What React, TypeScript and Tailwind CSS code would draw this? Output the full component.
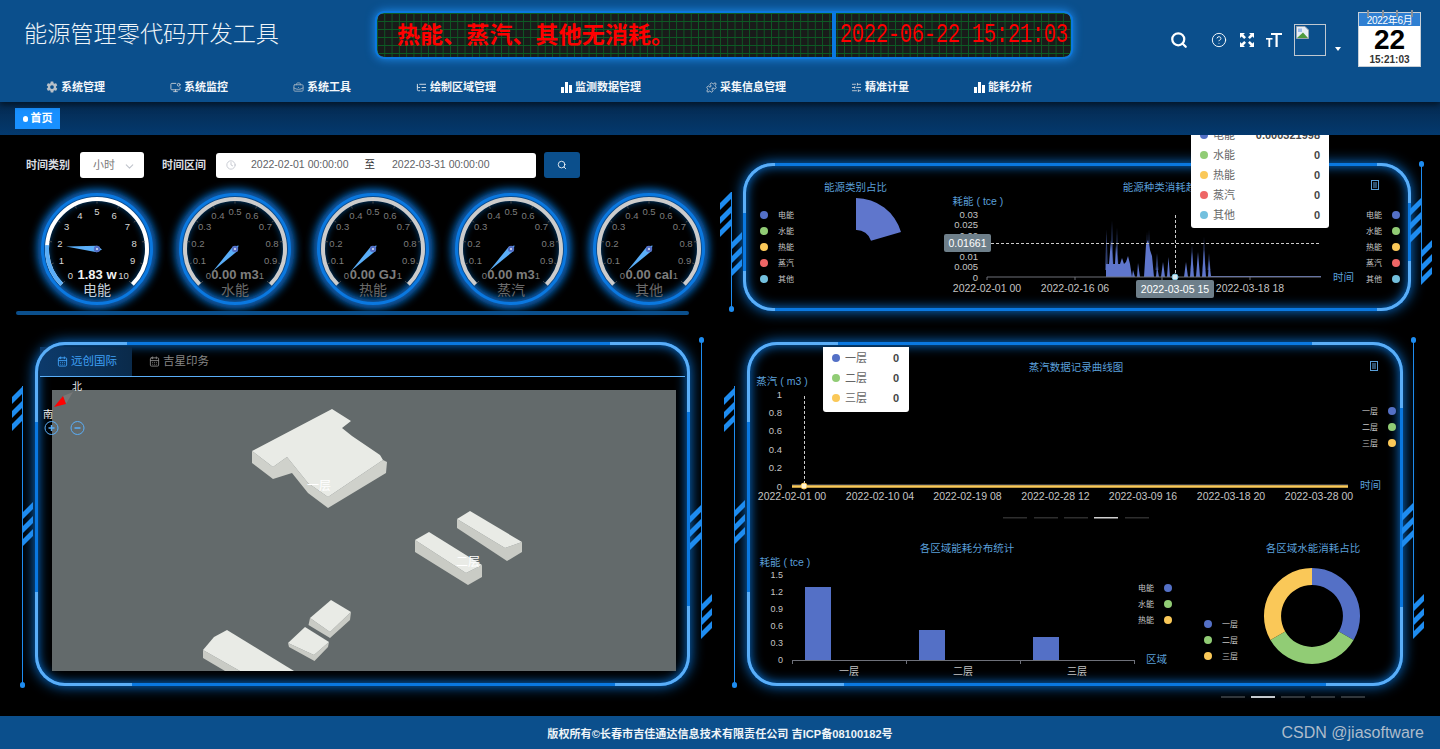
import {
  BriefcaseBusiness,
  CalendarDays,
  ChevronDown,
  CircleHelp,
  Clock,
  ListTree,
  MonitorDot,
  Puzzle,
  Search,
  SlidersHorizontal,
} from "lucide-react";
import { IoSettingsSharp } from "react-icons/io5";
import type { ReactNode } from "react";

const BLUE = "#5470c6";
const GREEN = "#91cc75";
const YELLOW = "#fac858";
const RED = "#ee6666";
const TEAL = "#73c0de";
const TITLE = "#5a9fd8";
const LABEL = "#c4c4c4";

const energyLegend = [
  { name: "电能", color: BLUE },
  { name: "水能", color: GREEN },
  { name: "热能", color: YELLOW },
  { name: "蒸汽", color: RED },
  { name: "其他", color: TEAL },
];
const floorLegend = [
  { name: "一层", color: BLUE },
  { name: "二层", color: GREEN },
  { name: "三层", color: YELLOW },
];

const Bars = () => (
  <svg width="11" height="11" viewBox="0 0 11 11" fill="#fff">
    <rect x="0" y="5" width="3" height="6" />
    <rect x="4" y="0" width="3" height="11" />
    <rect x="8" y="3" width="3" height="8" />
  </svg>
);

const navItems: { label: string; icon: ReactNode }[] = [
  { label: "系统管理", icon: <IoSettingsSharp size={12} color="#b8c0c8" /> },
  { label: "系统监控", icon: <MonitorDot size={11} color="#c4ccd4" /> },
  { label: "系统工具", icon: <BriefcaseBusiness size={11} color="#9fb0c0" /> },
  { label: "绘制区域管理", icon: <ListTree size={11} color="#dde4ea" /> },
  { label: "监测数据管理", icon: <Bars /> },
  { label: "采集信息管理", icon: <Puzzle size={11} color="#c4ccd4" /> },
  { label: "精准计量", icon: <SlidersHorizontal size={11} color="#c4ccd4" /> },
  { label: "能耗分析", icon: <Bars /> },
];

const Stripes = ({ className }: { className: string }) => (
  <svg className={`absolute ${className}`} width="12" height="45" viewBox="0 0 12 45" fill="#1e8cf0">
    <polygon points="0,11 11,0 11,7 0,18" />
    <polygon points="0,25 11,14 11,21 0,32" />
    <polygon points="0,38 11,27 11,34 0,45" />
  </svg>
);

const Rail = ({ className, dot }: { className: string; dot: "top" | "bottom" }) => (
  <div className={`absolute w-px bg-[#1e8cf0] ${className}`}>
    <div
      className={
        dot === "top"
          ? "absolute -top-[2px] -left-[2px] w-[5px] h-[6px] rounded-full bg-[#1e8cf0]"
          : "absolute -bottom-[2px] -left-[2px] w-[5px] h-[6px] rounded-full bg-[#1e8cf0]"
      }
    />
  </div>
);

const Panel = ({
  className,
  corners,
  children,
}: {
  className: string;
  corners: [string, string, string, string];
  children: ReactNode;
}) => (
  <div
    className={`relative border-[3px] border-[#0a78e0] rounded-[30px] shadow-[0_0_14px_#0a78e0,inset_0_0_12px_#0a78e0] ${className}`}
  >
    <div className={`absolute -top-[3px] -left-[3px] border-t-[3px] border-l-[3px] border-[#5aaef8] rounded-tl-[30px] ${corners[0]}`} />
    <div className={`absolute -top-[3px] -right-[3px] border-t-[3px] border-r-[3px] border-[#5aaef8] rounded-tr-[30px] ${corners[1]}`} />
    <div className={`absolute -bottom-[3px] -left-[3px] border-b-[3px] border-l-[3px] border-[#5aaef8] rounded-bl-[30px] ${corners[2]}`} />
    <div className={`absolute -bottom-[3px] -right-[3px] border-b-[3px] border-r-[3px] border-[#5aaef8] rounded-br-[30px] ${corners[3]}`} />
    {children}
  </div>
);

const polar = (cx: number, cy: number, r: number, t: number) => {
  const a = ((225 - 270 * t) * Math.PI) / 180;
  return [cx + r * Math.cos(a), cy - r * Math.sin(a)];
};

const arc = (cx: number, cy: number, r: number, t0: number, t1: number) => {
  const [x0, y0] = polar(cx, cy, r, t0);
  const [x1, y1] = polar(cx, cy, r, t1);
  return `M${x0} ${y0}A${r} ${r} 0 ${(t1 - t0) * 270 > 180 ? 1 : 0} 1 ${x1} ${y1}`;
};

const Gauge = ({
  value,
  max,
  unit,
  name,
  step,
}: {
  value: number;
  max: number;
  unit: string;
  name: string;
  step: number;
}) => {
  const cx = 69;
  const cy = 71;
  const t = value / max;
  const live = value > 0;
  const [tx, ty] = polar(cx, cy, 31, t);
  const [b1x, b1y] = polar(cx, cy, 3.2, t + 0.33);
  const [b2x, b2y] = polar(cx, cy, 3.2, t - 0.33);
  const [bx, by] = polar(cx, cy, 5, t + 0.667);
  const ticks = Array.from({ length: 11 }, (_, i) => i);
  return (
    <svg width="138" height="133" viewBox="0 0 138 133" className="overflow-visible shrink-0">
      <defs>
        <filter id={`glow-${name}`} x="-30%" y="-30%" width="160%" height="160%">
          <feGaussianBlur stdDeviation="4" />
        </filter>
      </defs>
      <circle cx={cx} cy={cy} r="55" fill="none" stroke="#0a78e0" strokeWidth="9" filter={`url(#glow-${name})`} />
      <circle cx={cx} cy={cy} r="54.5" fill="none" stroke="#0a78e0" strokeWidth="3" />
      <path d={arc(cx, cy, 50, 0, 1)} fill="none" stroke={live ? "#ffffff" : "#cccccc"} strokeWidth="4" />
      {live && <path d={arc(cx, cy, 50, 0, t)} fill="none" stroke="#5aaef8" strokeWidth="4" />}
      {ticks.map((i) => {
        const [x0, y0] = polar(cx, cy, 48, i / 10);
        const [x1, y1] = polar(cx, cy, 45.5, i / 10);
        const [lx, ly] = polar(cx, cy, 37.5, i / 10);
        const label = step === 1 ? String(i) : i === 0 ? "0" : i === 10 ? "1" : (i * step).toFixed(1);
        return (
          <g key={i}>
            <line x1={x0} y1={y0} x2={x1} y2={y1} stroke="#4a4a4a" />
            <text x={lx} y={ly + 3.5} textAnchor="middle" fontSize="9.5" fill={live ? "#d8d8d8" : "#7d7d7d"}>
              {label}
            </text>
          </g>
        );
      })}
      <polygon points={`${tx},${ty} ${b1x},${b1y} ${bx},${by} ${b2x},${b2y}`} fill="#5aaef8" />
      <circle cx={cx} cy={cy} r="3.2" fill={BLUE} />
      <circle cx={cx} cy={cy} r="1" fill="#dfe6f7" />
      <text x={cx} y={cy + 30} textAnchor="middle" fontSize="13" fontWeight="700" fill={live ? "#f2f2f2" : "#7d7d7d"}>
        {value.toFixed(2)} {unit}
      </text>
      <text x={cx} y={cy + 46} textAnchor="middle" fontSize="14" fill={live ? "#c4d0dc" : "#6a6a6a"}>
        {name}
      </text>
    </svg>
  );
};

const Legend = ({
  items,
  x,
  y,
  dotFirst,
}: {
  items: { name: string; color: string }[];
  x: number;
  y: number;
  dotFirst?: boolean;
}) => (
  <>
    {items.map((item, i) => (
      <g key={item.name}>
        <circle cx={dotFirst ? x : x + 30} cy={y + i * 16} r="4" fill={item.color} />
        <text x={dotFirst ? x + 14 : x} y={y + i * 16 + 3} fontSize="8" fill={LABEL}>
          {item.name}
        </text>
      </g>
    ))}
  </>
);

const DocIcon = ({ x, y }: { x: number; y: number }) => (
  <g transform={`translate(${x} ${y})`} fill="none" stroke={TITLE} strokeWidth="1">
    <rect x="0.5" y="0.5" width="7" height="9" />
    <line x1="2" y1="3" x2="6" y2="3" />
    <line x1="2" y1="5" x2="6" y2="5" />
    <line x1="2" y1="7" x2="6" y2="7" />
  </g>
);

const Tooltip = ({
  className,
  rows,
}: {
  className: string;
  rows: { name: string; color: string; value: string }[];
}) => (
  <div className={`absolute z-10 bg-white ${className}`}>
    {rows.map((r) => (
      <div key={r.name} className="flex items-center h-[20px]">
        <span className="w-[8px] h-[8px] rounded-full" style={{ backgroundColor: r.color }} />
        <span className="ml-[5px] text-[11px] text-[#666]">{r.name}</span>
        <span className="ml-auto text-[11px] font-bold text-[#464646]">{r.value}</span>
      </div>
    ))}
  </div>
);

const Pager = ({ active, className }: { active: number; className: string }) => (
  <div className={`flex gap-[6px] ${className}`}>
    {[0, 1, 2, 3, 4].map((i) => (
      <div key={i} className={i === active ? "w-[24px] h-[2px] bg-[#cfcfcf]" : "w-[24px] h-[2px] bg-[#333]"} />
    ))}
  </div>
);

// solid part of the trend series, thin dim peaks are drawn behind it
const trend =
  "1106,277 1106,264 1109,264 1111,240 1113,264 1115,264 1116,245 1118,264 1120,264 1122,258 1124,264 1126,262 1128,256 1130,264 1132,277 " +
  "1133,270 1135,277 1137,277 1138,263 1140,277 1144,277 1146,245 1148,240 1150,250 1152,256 1154,277 1156,277 1157,266 1159,277 1161,277 1163,262 1165,277 " +
  "1167,277 1168.5,257 1170,277 1184,277 1186,262 1188,277 1190,277 1192,252 1194,277 1196,277 1198,252 1200,277 1202,277 1204,250 1206,277 1208,277 1209,260 1211,276 1321,276 1321,277";

const peaks = [
  [1106.5, 230],
  [1112, 220],
  [1117, 228],
  [1147, 232],
  [1149, 230],
  [1157, 253],
  [1192, 245],
  [1204, 237],
  [1209, 253],
];

const EnergyPie = () => (
  <svg width="194" height="142" viewBox="746 166 194 142" className="shrink-0">
    <Legend items={energyLegend} x={764} y={215} dotFirst />
    <text x="855.5" y="191" textAnchor="middle" fontSize="10.5" fill={TITLE}>
      能源类别占比
    </text>
    <path d="M856 198A47 47 0 0 1 901 232L871 240.7A15 15 0 0 0 856 230Z" fill="#5f76cc" />
  </svg>
);

const EnergyTrend = () => (
  <svg width="468" height="142" viewBox="940 166 468 142" className="shrink-0">
    <text x="1170" y="191" textAnchor="middle" fontSize="10.5" fill={TITLE}>
      能源种类消耗趋势图
    </text>
    <text x="978" y="205" textAnchor="middle" fontSize="10.5" fill={TITLE}>
      耗能 ( tce )
    </text>
    {[
      ["0.03", 214],
      ["0.025", 224.5],
      ["0.02", 235],
      ["0.01", 256],
      ["0.005", 266.5],
      ["0", 277],
    ].map(([t, y]) => (
      <text key={t} x="978" y={Number(y) + 3.5} textAnchor="end" fontSize="9.5" fill={LABEL}>
        {t}
      </text>
    ))}
    {peaks.map(([x, y]) => (
      <polygon key={x} points={`${x - 1.5},270 ${x},${y} ${x + 1.5},270`} fill={BLUE} fillOpacity="0.55" />
    ))}
    <polygon points={trend} fill="#5f76cc" />
    <line x1="987" y1="277" x2="1321" y2="277" stroke="#6e7079" />
    {[987, 1075, 1162, 1250].map((x) => (
      <line key={x} x1={x} y1="277" x2={x} y2="280" stroke="#6e7079" />
    ))}
    {[
      ["2022-02-01 00", 987],
      ["2022-02-16 06", 1075],
      ["2022-03-18 18", 1250],
    ].map(([t, x]) => (
      <text key={t} x={x} y="292" textAnchor="middle" fontSize="10.5" fill={LABEL}>
        {t}
      </text>
    ))}
    <line x1="991" y1="243.5" x2="1321" y2="243.5" stroke="#ccc" strokeDasharray="3 2" />
    <line x1="1175.5" y1="215" x2="1175.5" y2="277" stroke="#ccc" strokeDasharray="3 2" />
    <circle cx="1175" cy="277" r="3" fill="#d8e8f0" stroke={TEAL} />
    <rect x="944" y="234" width="47" height="18" rx="2" fill="#6e7f8a" />
    <text x="967.5" y="247" textAnchor="middle" fontSize="10.5" fill="#fff">
      0.01661
    </text>
    <rect x="1136" y="280" width="78" height="18" rx="2" fill="#6e7f8a" />
    <text x="1175" y="292.5" textAnchor="middle" fontSize="10.5" fill="#fff">
      2022-03-05 15
    </text>
    <text x="1333" y="281" fontSize="10.5" fill={TITLE}>
      时间
    </text>
    <DocIcon x={1371} y={180} />
    <Legend items={energyLegend} x={1366} y={215} />
  </svg>
);

const SteamChart = () => (
  <svg width="650" height="200" viewBox="750 345 650 200" className="block">
    <text x="1076" y="371" textAnchor="middle" fontSize="10.5" fill={TITLE}>
      蒸汽数据记录曲线图
    </text>
    <text x="782" y="385" textAnchor="middle" fontSize="10.5" fill={TITLE}>
      蒸汽 ( m3 )
    </text>
    {[
      ["1", 394],
      ["0.8", 412.5],
      ["0.6", 430.5],
      ["0.4", 449],
      ["0.2", 467.5],
      ["0", 486],
    ].map(([t, y]) => (
      <text key={t} x="782" y={Number(y) + 3.5} textAnchor="end" fontSize="9.5" fill={LABEL}>
        {t}
      </text>
    ))}
    <line x1="804.5" y1="396" x2="804.5" y2="484" stroke="#ccc" strokeDasharray="3 2" />
    <line x1="792" y1="485" x2="1348" y2="485" stroke="#6e7079" />
    <line x1="792" y1="486.5" x2="1348" y2="486.5" stroke={YELLOW} strokeWidth="2.5" />
    <circle cx="804" cy="486" r="3" fill="#fff4d0" stroke={YELLOW} />
    {[
      ["2022-02-01 00", 792],
      ["2022-02-10 04", 880],
      ["2022-02-19 08", 967.5],
      ["2022-02-28 12", 1055.5],
      ["2022-03-09 16", 1143],
      ["2022-03-18 20", 1231],
      ["2022-03-28 00", 1319],
    ].map(([t, x]) => (
      <text key={t} x={x} y="500" textAnchor="middle" fontSize="10.5" fill={LABEL}>
        {t}
      </text>
    ))}
    <text x="1360" y="489" fontSize="10.5" fill={TITLE}>
      时间
    </text>
    <DocIcon x={1370} y={361} />
    <g transform="translate(-1 -4)">
      <Legend items={floorLegend} x={1363} y={415} />
    </g>
    {[1003, 1034, 1064, 1094, 1125].map((x) => (
      <rect key={x} x={x} y="517" width="24" height="1.5" fill={x === 1094 ? "#d0d0d0" : "#2e2e2e"} />
    ))}
  </svg>
);

const AreaBars = () => (
  <svg width="450" height="138" viewBox="750 545 450 138" className="shrink-0 overflow-visible">
    <text x="967" y="552" textAnchor="middle" fontSize="10.5" fill={TITLE}>
      各区域能耗分布统计
    </text>
    <text x="785" y="566" textAnchor="middle" fontSize="10.5" fill={TITLE}>
      耗能 ( tce )
    </text>
    {[
      ["1.5", 575],
      ["1.2", 592],
      ["0.9", 609],
      ["0.6", 626],
      ["0.3", 643],
      ["0", 660],
    ].map(([t, y]) => (
      <text key={t} x="783" y={Number(y) + 3} textAnchor="end" fontSize="9" fill={LABEL}>
        {t}
      </text>
    ))}
    <rect x="805" y="587" width="26" height="73" fill={BLUE} />
    <rect x="919" y="630" width="26" height="30" fill={BLUE} />
    <rect x="1033" y="637" width="26" height="23" fill={BLUE} />
    <line x1="792" y1="660.5" x2="1134" y2="660.5" stroke="#6e7079" />
    {[792, 906, 1020, 1134].map((x) => (
      <line key={x} x1={x + 0.5} y1="660" x2={x + 0.5} y2="664" stroke="#6e7079" />
    ))}
    {[
      ["一层", 849],
      ["二层", 963],
      ["三层", 1077],
    ].map(([t, x]) => (
      <text key={t} x={x} y="675" textAnchor="middle" fontSize="10" fill={LABEL}>
        {t}
      </text>
    ))}
    <Legend items={floorLegend.map((f, i) => ({ ...f, name: energyLegend[i].name }))} x={1138} y={588} />
    <text x="1146" y="663" fontSize="10.5" fill={TITLE}>
      区域
    </text>
  </svg>
);

const AreaDonut = () => (
  <svg width="200" height="138" viewBox="1200 545 200 138" className="shrink-0 overflow-visible">
    <text x="1313" y="552" textAnchor="middle" fontSize="10.5" fill={TITLE}>
      各区域水能消耗占比
    </text>
    <Legend items={floorLegend} x={1208} y={624} dotFirst />
    <path d="M1312 568A48 48 0 0 1 1353.6 640L1338.8 631.5A31 31 0 0 0 1312 585Z" fill={BLUE} />
    <path d="M1353.6 640A48 48 0 0 1 1270.4 640L1285.2 631.5A31 31 0 0 0 1338.8 631.5Z" fill={GREEN} />
    <path d="M1270.4 640A48 48 0 0 1 1312 568L1312 585A31 31 0 0 0 1285.2 631.5Z" fill={YELLOW} />
  </svg>
);

const MapView = () => (
  <div className="relative w-[624px] h-[281px] ml-[12px] mt-[13px] bg-[#636a6b]">
    <svg width="624" height="281" viewBox="52 390 624 281" className="block">
      <polygon
        points="252,451 273,467 287,457 308,483 328,497 383,460 387,462 386,473 328,508 308,493 292,473 273,479 252,463"
        fill="#cfd1cb"
      />
      <polygon
        points="252,451 332,409 351,421 342,428 352,436 380,455 383,460 328,497 308,483 287,457 273,467"
        fill="#e9ebe6"
      />
      <polygon points="415,540 466,573 482,565 482,577 468,585 415,552" fill="#c9cbc5" />
      <polygon points="415,540 429,532 482,565 466,573" fill="#e9ebe6" />
      <polygon points="457,519 505,548 522,542 522,552 507,561 457,528" fill="#c9cbc5" />
      <polygon points="457,519 470,511 522,542 505,548" fill="#e9ebe6" />
      <polygon points="310,618 330,632 351,612 350,620 330,638 308.5,625" fill="#c9cbc5" />
      <polygon points="310,618 331,600 351,612 330,632" fill="#e9ebe6" />
      <polygon points="288,643 314,655 329,642 328,647 314.5,661 289,647" fill="#c9cbc5" />
      <polygon points="288,643 305,627 329,642 314,655" fill="#e9ebe6" />
      <polygon points="203,650 203,658 225,671 240,671" fill="#c9cbc5" />
      <polygon points="203,650 214,637 227,630 294,671 240,671" fill="#e9ebe6" />
    </svg>
    <span className="absolute left-[255px] top-[90px] text-[12px] leading-none text-white">一层</span>
    <span className="absolute left-[404px] top-[166px] text-[12px] leading-none text-white">二层</span>
    <Compass />
  </div>
);

const Compass = () => (
  <svg className="absolute -left-[11px] -top-[12px] overflow-visible" width="44" height="58" viewBox="41 378 44 58">
    <text x="77" y="390" textAnchor="middle" fontSize="10" fill="#eee">
      北
    </text>
    <text x="48" y="418" textAnchor="middle" fontSize="10" fill="#eee">
      南
    </text>
    <polygon points="63,396 73,392 66,404" fill="#777" />
    <polygon points="54,407 63,396 66,404" fill="#f00" />
    <circle cx="51.5" cy="428" r="6.5" fill="none" stroke="#5aaef8" />
    <path d="M48.5 428H54.5M51.5 425V431" stroke="#5aaef8" strokeWidth="1.5" />
    <circle cx="77.5" cy="428" r="6.5" fill="none" stroke="#5aaef8" />
    <path d="M74.5 428H80.5" stroke="#5aaef8" strokeWidth="1.5" />
  </svg>
);

const FullscreenIcon = () => (
  <svg width="16" height="16" viewBox="0 0 16 16" fill="#fff">
    <path d="M1 1H6L4.4 2.6L7 5.2L5.2 7L2.6 4.4L1 6Z" />
    <path d="M15 1V6L13.4 4.4L10.8 7L9 5.2L11.6 2.6L10 1Z" />
    <path d="M1 15V10L2.6 11.6L5.2 9L7 10.8L4.4 13.4L6 15Z" />
    <path d="M15 15H10L11.6 13.4L9 10.8L10.8 9L13.4 11.6L15 10Z" />
  </svg>
);

const FontSizeIcon = () => (
  <svg width="16" height="16" viewBox="0 0 16 16" fill="#fff">
    <rect x="5" y="1" width="11" height="2" />
    <rect x="9.5" y="1" width="2.2" height="14" />
    <rect x="0" y="6" width="6.5" height="1.6" />
    <rect x="2.4" y="6" width="1.8" height="9" />
  </svg>
);

const BrokenImage = () => (
  <svg width="13" height="13" viewBox="0 0 13 13" className="absolute left-px top-px">
    <path d="M0.5 0.5H9L12.5 4V12.5H0.5Z" fill="#e8eef6" stroke="#9aa4b0" />
    <path d="M1 12L7 6.5L12 12Z" fill="#4f9a3e" />
    <path d="M2 2.5H6V6H2Z" fill="#9fbce8" />
  </svg>
);

const CalendarCard = () => (
  <div className="relative w-[63px] h-[55px] bg-white border border-[#c8d0d8] flex flex-col items-center shrink-0">
    <div className="w-full h-[13px] bg-[#2f7fd2] text-white text-[10px] leading-[15px] text-center tracking-[-0.3px]">
      2022年6月
    </div>
    <div className="text-[28px] font-bold leading-[26px] mt-[1px] text-black">22</div>
    <div className="text-[10px] leading-[12px] font-bold text-[#333] mt-px">15:21:03</div>
    <div className="absolute -top-[3px] left-[8px] right-[7px] flex justify-between">
      {[0, 1, 2, 3].map((i) => (
        <span key={i} className="w-[2px] h-[7px] bg-[#8a8f96]" />
      ))}
    </div>
  </div>
);

const Header = () => (
  <header className="relative z-20 h-[102px] shrink-0 bg-[#0b4f8c] shadow-[0_3px_6px_rgba(0,0,0,0.5)]">
    <div className="flex h-[72px]">
      <div className="w-[375px] shrink-0 pl-[24px] pt-[17px] text-[23.2px] leading-[34px] text-[#eef4f8] font-light">
        能源管理零代码开发工具
      </div>
      <div className="relative mt-[11px] w-[698px] h-[48px] shrink-0 flex rounded-[9px] border-2 border-[#0a78e0] shadow-[0_0_10px_#1e8cf0] bg-[#191b1a] bg-[linear-gradient(#0d5a24_1px,transparent_1px),linear-gradient(90deg,#0d5a24_1px,transparent_1px)] bg-[size:7.3px_8px] overflow-hidden">
        <div className="w-[455px] shrink-0 pl-[20px] flex items-center text-[23px] font-bold text-[#f00] tracking-[0.1px]">
          热能、蒸汽、其他无消耗。
        </div>
        <div className="w-[4px] shrink-0 bg-[#0a78e0]" />
        <div className="flex-1 flex items-center pl-[4px] text-[21px] text-[#f00] font-['Liberation_Mono',monospace] tracking-[-0.6px] whitespace-nowrap">
          <span className="inline-block scale-y-[1.3]">2022-06-22 15:21:03</span>
        </div>
        <div className="absolute -left-[2px] -top-[2px] w-[34px] h-[48px] rounded-l-[9px] border-l-2 border-t-2 border-b-2 border-[#5aaef8]" />
        <div className="absolute -right-[2px] -top-[2px] w-[34px] h-[48px] rounded-r-[9px] border-r-2 border-t-2 border-b-2 border-[#5aaef8]" />
      </div>
      <div className="flex items-start flex-1 min-w-0">
        <Search size={18} strokeWidth={3} color="#fff" className="ml-[97px] mt-[31px] shrink-0" />
        <CircleHelp size={16} strokeWidth={1.4} color="#fff" className="ml-[23px] mt-[32px] shrink-0" />
        <span className="ml-[12px] mt-[32px] shrink-0">
          <FullscreenIcon />
        </span>
        <span className="ml-[11px] mt-[32px] shrink-0">
          <FontSizeIcon />
        </span>
        <div className="relative ml-[12px] mt-[24px] w-[32px] h-[32px] border border-[#c0c8d0] shrink-0">
          <BrokenImage />
        </div>
        <span className="ml-[9px] mt-[47px] w-0 h-0 border-x-[3px] border-x-transparent border-t-[4px] border-t-white shrink-0" />
        <div className="ml-[17px] mt-[12px]">
          <CalendarCard />
        </div>
      </div>
    </div>
    <nav className="flex gap-[65px] pl-[46px] h-[30px] items-center">
      {navItems.map((item) => (
        <div key={item.label} className="flex items-center gap-[3px] text-[11px] font-bold text-[#f2f6fa] whitespace-nowrap">
          {item.icon}
          <span>{item.label}</span>
        </div>
      ))}
    </nav>
  </header>
);

const FilterBar = () => (
  <div className="flex items-center h-[26px] pl-[26px] text-[11px]">
    <span className="font-bold text-[#d8dce0]">时间类别</span>
    <div className="ml-[10px] w-[64px] h-[26px] bg-white rounded-[3px] flex items-center pl-[13px] pr-[8px] text-[#7a7a7a]">
      小时
      <ChevronDown size={13} color="#c0c4cc" className="ml-auto mt-[3px]" />
    </div>
    <span className="ml-[18px] font-bold text-[#d8dce0]">时间区间</span>
    <div className="ml-[10px] w-[320px] h-[25px] bg-white rounded-[3px] flex items-center pl-[10px] text-[10.5px] text-[#606266]">
      <Clock size={10} color="#c0c4cc" />
      <span className="ml-[15px]">2022-02-01 00:00:00</span>
      <span className="ml-[16px] text-[#303133]">至</span>
      <span className="ml-[17px]">2022-03-31 00:00:00</span>
    </div>
    <div className="ml-[8px] w-[36px] h-[26px] bg-[#0b4f8c] rounded-[3px] flex items-center justify-center">
      <Search size={10} color="#fff" />
    </div>
  </div>
);

const MapPanel = () => (
  <Panel
    className="w-[655px] h-[344px] ml-[35px] mt-[27px]"
    corners={["w-[92px] h-[80px]", "w-[80px] h-[70px]", "w-[97px] h-[94px]", "w-[75px] h-[80px]"]}
  >
    <div className="pt-[2px] pl-[2px] pr-[2px]">
      <div className="flex h-[30px] border-b border-[#5aaef8] text-[11.5px]">
        <div className="w-[92px] flex items-center pl-[17px] gap-[3px] bg-gradient-to-r from-[#0c3a6b] to-[#0a2a4a] text-[#3fa0f5]">
          <CalendarDays size={11} />
          远创国际
        </div>
        <div className="flex items-center pl-[17px] gap-[3px] text-[#858585]">
          <CalendarDays size={11} />
          吉星印务
        </div>
      </div>
      <MapView />
    </div>
    <Rail className="-left-[16px] top-[41px] h-[300px]" dot="bottom" />
    <Stripes className="-left-[26px] top-[41px]" />
    <Stripes className="-left-[16px] top-[157px]" />
    <Rail className="-right-[15px] -top-[6px] h-[298px]" dot="top" />
    <Stripes className="-right-[15px] top-[160px]" />
    <Stripes className="-right-[26px] top-[249px]" />
  </Panel>
);

const App = () => (
  <div className="flex flex-col h-[749px] w-[1440px] overflow-hidden bg-black font-['Liberation_Sans','Noto_Sans_CJK_SC',sans-serif]">
    <Header />
    <div className="h-[33px] shrink-0 pl-[15px] pt-[6px] bg-gradient-to-b from-[#052a50] to-[#03396e]">
      <div className="w-[45px] h-[21px] bg-[#1890ff] flex items-center justify-center gap-[3px] text-[11px] font-bold text-white">
        <span className="w-[5px] h-[6px] rounded-full bg-white" />
        首页
      </div>
    </div>
    <main className="relative flex flex-1 min-h-0 overflow-hidden bg-black">
      <section className="w-[720px] shrink-0 pt-[17px]">
        <FilterBar />
        <div className="flex pl-[28px]">
          {[
            { value: 1.83, max: 10, unit: "w", name: "电能", step: 1 },
            { value: 0, max: 1, unit: "m3", name: "水能", step: 0.1 },
            { value: 0, max: 1, unit: "GJ", name: "热能", step: 0.1 },
            { value: 0, max: 1, unit: "m3", name: "蒸汽", step: 0.1 },
            { value: 0, max: 1, unit: "cal", name: "其他", step: 0.1 },
          ].map((g) => (
            <Gauge key={g.name} {...g} />
          ))}
        </div>
        <div className="relative h-[4px] ml-[16px] w-[673px] rounded-full bg-[#0b4f8c]" />
        <MapPanel />
      </section>
      <section className="w-[720px] shrink-0">
        <Panel
          className="w-[668px] h-[148px] ml-[23px] mt-[28px]"
          corners={["w-[32px] h-[50px]", "w-[34px] h-[40px]", "w-[32px] h-[40px]", "w-[34px] h-[50px]"]}
        >
          <div className="flex">
            <EnergyPie />
            <EnergyTrend />
          </div>
          <Tooltip
            className="left-[445px] -top-[41px] w-[138px] h-[103px] px-[9px] rounded-[3px]"
            rows={[
              { name: "电能", color: BLUE, value: "0.000321998" },
              { name: "水能", color: GREEN, value: "0" },
              { name: "热能", color: YELLOW, value: "0" },
              { name: "蒸汽", color: RED, value: "0" },
              { name: "其他", color: TEAL, value: "0" },
            ]}
          />
          <Rail className="-left-[15px] top-[26px] h-[118px]" dot="bottom" />
          <Stripes className="-left-[26px] top-[26px]" />
          <Stripes className="-left-[15px] top-[66px]" />
          <Rail className="-right-[14px] -top-[3px] h-[115px]" dot="top" />
          <Stripes className="-right-[14px] top-[32px]" />
          <Stripes className="-right-[25px] top-[74px]" />
        </Panel>
        <Panel
          className="w-[656px] h-[344px] ml-[27px] mt-[31px]"
          corners={["w-[91px] h-[80px]", "w-[91px] h-[66px]", "w-[97px] h-[94px]", "w-[77px] h-[79px]"]}
        >
          <SteamChart />
          <div className="flex">
            <AreaBars />
            <AreaDonut />
          </div>
          <Tooltip
            className="left-[73px] top-[2px] w-[86px] h-[65px] pl-[9px] pr-[10px] pt-px rounded-b-[3px]"
            rows={[
              { name: "一层", color: BLUE, value: "0" },
              { name: "二层", color: GREEN, value: "0" },
              { name: "三层", color: YELLOW, value: "0" },
            ]}
          />
          <Rail className="-left-[16px] top-[41px] h-[300px]" dot="bottom" />
          <Stripes className="-left-[26px] top-[42px]" />
          <Stripes className="-left-[16px] top-[155px]" />
          <Rail className="-right-[14px] -top-[6px] h-[298px]" dot="top" />
          <Stripes className="-right-[14px] top-[158px]" />
          <Stripes className="-right-[25px] top-[249px]" />
        </Panel>
        <Pager active={1} className="justify-end pr-[75px] mt-[10px]" />
      </section>
    </main>
    <footer className="relative h-[33px] shrink-0 bg-[#0b4f8c] flex items-center justify-center pt-[4px] text-[11.1px] font-bold text-[#eef4f8]">
      版权所有©长春市吉佳通达信息技术有限责任公司 吉ICP备08100182号
      <span className="absolute right-[16px] top-[5px] text-[16px] font-normal text-[#aebccb]">CSDN @jiasoftware</span>
    </footer>
  </div>
);

export default App;
